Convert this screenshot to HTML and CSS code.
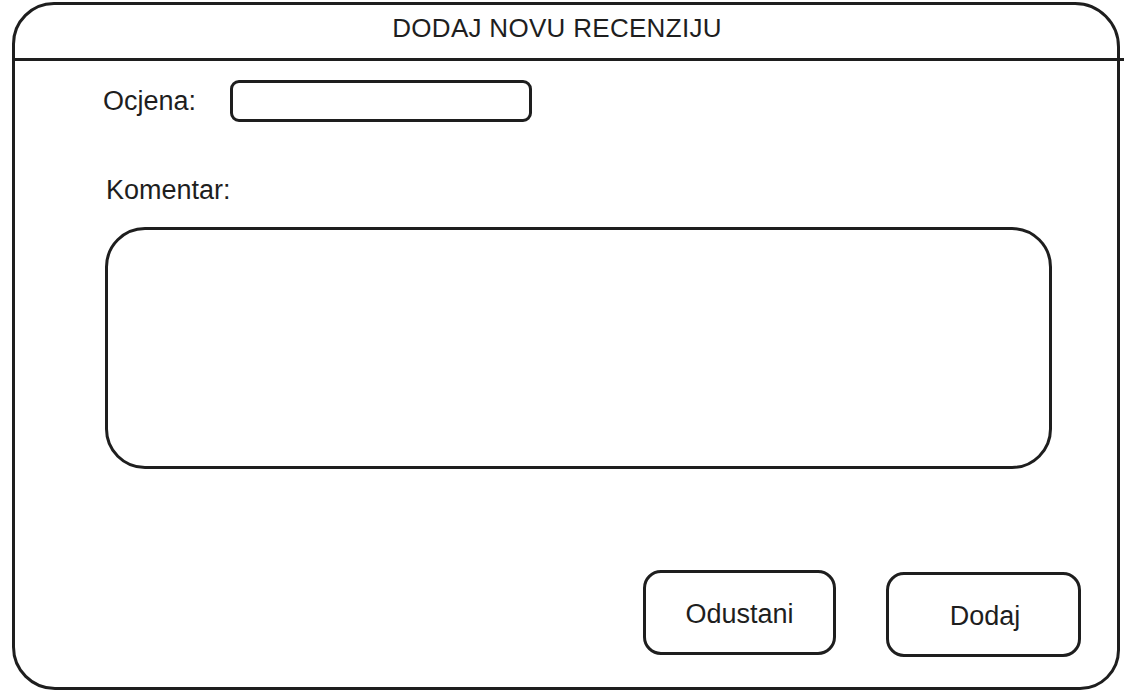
FILE: index.html
```html
<!DOCTYPE html>
<html lang="hr">
<head>
<meta charset="utf-8">
<title>Dodaj novu recenziju</title>
<link rel="stylesheet" href="styles.css">
</head>
<body>
  <div class="dialog">
    <div class="dialog-header">
      <div class="dialog-title">DODAJ NOVU RECENZIJU</div>
    </div>
    <div class="dialog-body">
      <div class="rating-row">
        <div class="rating-label">Ocjena:</div>
        <div class="rating-input"></div>
      </div>
      <div class="comment-label">Komentar:</div>
      <div class="comment-box"></div>
      <div class="actions">
        <div class="btn btn-cancel">Odustani</div>
        <div class="btn btn-add">Dodaj</div>
      </div>
    </div>
  </div>
</body>
</html>
```
FILE: styles.css
```css
* {
  box-sizing: border-box;
}

html, body {
  margin: 0;
  padding: 0;
  background: #ffffff;
}

body {
  font-family: "Liberation Sans", Arial, Helvetica, sans-serif;
  color: #1e1e1e;
  font-size: 27px;
}

.dialog {
  width: 1108px;
  height: 688px;
  margin: 2px 0 0 12px;
  border: 3px solid #1e1e1e;
  border-radius: 42px 45px 40px 43px;
  display: flex;
  flex-direction: column;
}

.dialog-header {
  height: 56px;
  margin: 0 -7px 0 -3px;
  padding: 0 22px 6px 0;
  border-bottom: 3px solid #1e1e1e;
}

.dialog-title {
  font-size: 26px;
  line-height: 47px;
  text-align: center;
  letter-spacing: 0.3px;
}

.dialog-body {
  flex: 1;
  padding: 19px 36px 0 90px;
  display: flex;
  flex-direction: column;
}

.rating-row {
  display: flex;
  align-items: center;
  height: 42px;
  margin-left: -2px;
}

.rating-label {
  width: 127px;
  line-height: 30px;
}

.rating-input {
  width: 302px;
  height: 42px;
  border: 3px solid #1e1e1e;
  border-radius: 9px;
}

.comment-label {
  margin-top: 53px;
  margin-left: 1px;
  line-height: 30px;
}

.comment-box {
  margin-top: 22px;
  width: 947px;
  height: 242px;
  border: 3px solid #1e1e1e;
  border-radius: 40px;
}

.actions {
  margin-top: 101px;
  display: flex;
  justify-content: flex-end;
  align-items: flex-start;
  gap: 50px;
}

.btn {
  height: 85px;
  border: 3px solid #1e1e1e;
  border-radius: 18px;
  display: flex;
  align-items: center;
  justify-content: center;
  padding-top: 3px;
}

.btn-cancel {
  width: 193px;
}

.btn-add {
  width: 195px;
  margin-top: 2px;
  padding-left: 3px;
}
```
